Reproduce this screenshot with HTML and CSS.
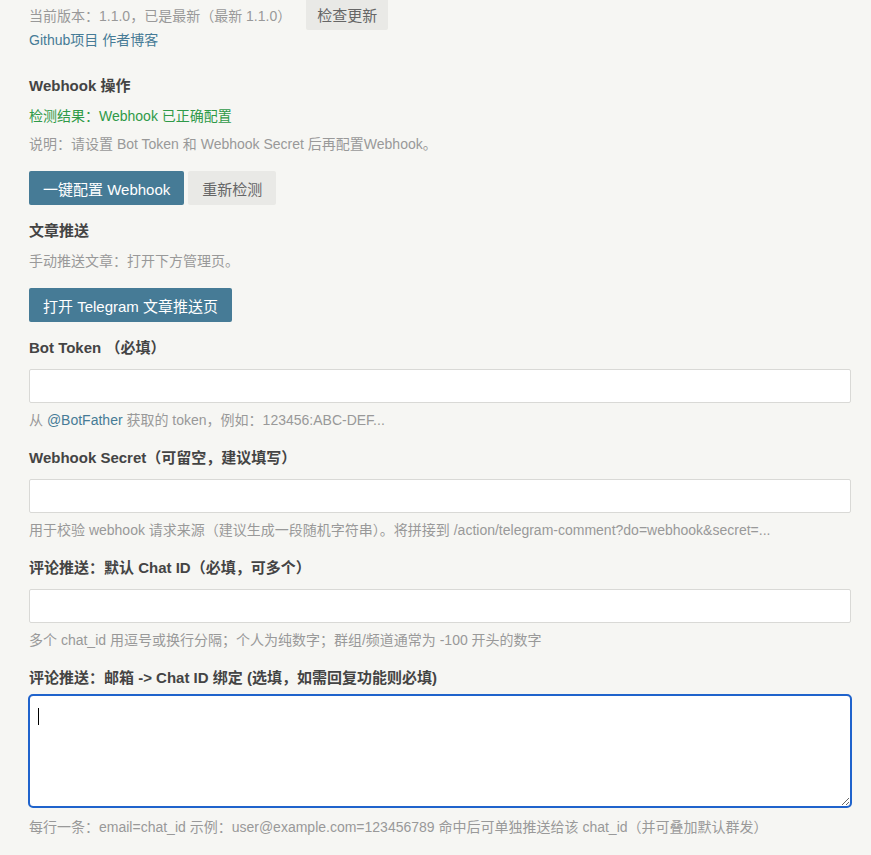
FILE: index.html
```html
<!DOCTYPE html>
<html lang="zh-CN">
<head>
<meta charset="utf-8">
<title>Telegram Comment 设置</title>
<link rel="stylesheet" href="styles.css">
</head>
<body>
<div class="page">
  <div class="version-row">
    <span class="muted-text">当前版本：1.1.0，已是最新（最新 1.1.0）</span>
    <button class="btn">检查更新</button>
  </div>
  <div class="links"><a href="#">Github项目</a> <a href="#">作者博客</a></div>

  <section class="block">
    <h3 class="label first">Webhook 操作</h3>
    <p class="ok">检测结果：Webhook 已正确配置</p>
    <p class="desc">说明：请设置 Bot Token 和 Webhook Secret 后再配置Webhook。</p>
    <div class="btn-row">
      <button class="btn primary">一键配置 Webhook</button>
      <button class="btn">重新检测</button>
    </div>
  </section>

  <section class="block">
    <h3 class="label">文章推送</h3>
    <p class="desc">手动推送文章：打开下方管理页。</p>
    <div class="btn-row">
      <button class="btn primary">打开 Telegram 文章推送页</button>
    </div>
  </section>

  <div class="field">
    <label class="label">Bot Token （必填）</label>
    <input class="text" type="text">
    <p class="desc">从 <a href="#">@BotFather</a> 获取的 token，例如：123456:ABC-DEF...</p>
  </div>

  <div class="field">
    <label class="label">Webhook Secret（可留空，建议填写）</label>
    <input class="text" type="text">
    <p class="desc">用于校验 webhook 请求来源（建议生成一段随机字符串）。将拼接到 /action/telegram-comment?do=webhook&amp;secret=...</p>
  </div>

  <div class="field">
    <label class="label">评论推送：默认 Chat ID（必填，可多个）</label>
    <input class="text" type="text">
    <p class="desc">多个 chat_id 用逗号或换行分隔；个人为纯数字；群组/频道通常为 -100 开头的数字</p>
  </div>

  <div class="field">
    <label class="label">评论推送：邮箱 -&gt; Chat ID 绑定 (选填，如需回复功能则必填)</label>
    <div class="area-wrap">
      <textarea class="area"></textarea>
      <span class="caret"></span>
    </div>
    <p class="desc">每行一条：email=chat_id 示例：user@example.com=123456789 命中后可单独推送给该 chat_id（并可叠加默认群发）</p>
  </div>
</div>
</body>
</html>
```

FILE: styles.css
```css
html, body {
  margin: 0;
  padding: 0;
  background: #f6f6f3;
}
body {
  font-family: "Liberation Sans", Arial, "Noto Sans CJK SC", sans-serif;
  font-size: 14px;
  color: #444;
  line-height: 20px;
}
.page {
  padding: 0 20px 40px 29px;
  margin-top: -2px;
}
a { color: #467b96; text-decoration: none; }
p { margin: 0; }

.version-row {
  display: flex;
  align-items: flex-start;
  gap: 15px;
  height: 32px;
}
.muted-text { color: #999; padding-top: 8px; }
.links { line-height: 20px; height: 20px; }

.btn {
  font-family: inherit;
  font-size: 15px;
  height: 34px;
  padding: 0 14px;
  border: none;
  border-radius: 2px;
  background: #e9e9e6;
  color: #666;
  cursor: pointer;
}
.version-row .btn { height: 32px; padding: 0 11px; }
.btn.primary { background: #467b96; color: #fff; }

.label {
  display: block;
  font-size: 15px;
  font-weight: bold;
  margin: 0;
  line-height: 20px;
  color: #444;
}
.block .label.first { margin-top: 26px; }
.ok { color: #2f9a48; margin-top: 10px; }
.block .desc { margin-top: 9px; }
.btn-row {
  display: flex;
  gap: 4px;
  margin-top: 18px;
}
.block + .block { margin-top: 16px; }
.block + .block .desc { margin-top: 11px; }
.block + .block .btn-row { margin-top: 18px; }

.desc {
  font-size: 14px;
  color: #999;
  line-height: 18px;
}
.block + .field { margin-top: 16px; }
.field .text {
  display: block;
  box-sizing: border-box;
  width: 100%;
  height: 34px;
  margin-top: 11px;
  border: 1px solid #d9d9d6;
  border-radius: 2px;
  background: #fff;
  padding: 0 8px;
  font: inherit;
}
.field .desc { margin-top: 8px; }
.field + .field { margin-top: 19px; }

.area-wrap {
  position: relative;
  margin-top: 7px;
}
.area {
  display: block;
  box-sizing: border-box;
  width: 100%;
  height: 112px;
  border: 1px solid #d9d9d6;
  border-radius: 4px;
  background: #fff;
  outline: 2px solid #1f63cc;
  outline-offset: -1px;
  padding: 6px 8px;
  font: inherit;
  resize: vertical;
}
.caret {
  position: absolute;
  left: 9px;
  top: 13px;
  width: 1px;
  height: 17px;
  background: #000;
}
.field:last-child .desc { margin-top: 11px; }
```
